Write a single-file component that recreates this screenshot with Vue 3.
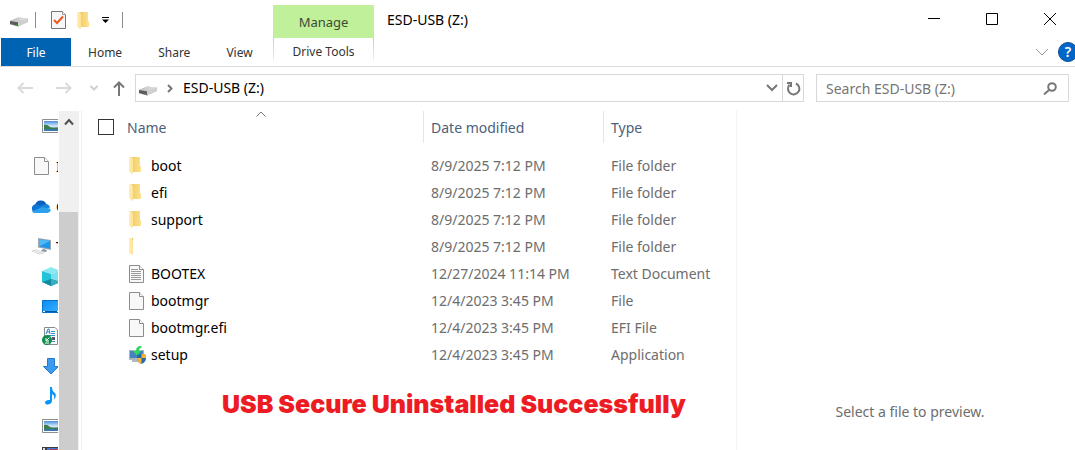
<script setup>
const tabs = ['Home', 'Share', 'View']

const files = [
  { name: 'boot', date: '8/9/2025 7:12 PM', type: 'File folder', icon: 'folder' },
  { name: 'efi', date: '8/9/2025 7:12 PM', type: 'File folder', icon: 'folder' },
  { name: 'support', date: '8/9/2025 7:12 PM', type: 'File folder', icon: 'folder' },
  { name: '', date: '8/9/2025 7:12 PM', type: 'File folder', icon: 'sliver' },
  { name: 'BOOTEX', date: '12/27/2024 11:14 PM', type: 'Text Document', icon: 'text' },
  { name: 'bootmgr', date: '12/4/2023 3:45 PM', type: 'File', icon: 'file' },
  { name: 'bootmgr.efi', date: '12/4/2023 3:45 PM', type: 'EFI File', icon: 'file' },
  { name: 'setup', date: '12/4/2023 3:45 PM', type: 'Application', icon: 'setup' },
]

const places = [
  { icon: 'picture', level: 'child' },
  { icon: 'page', level: 'root', label: 'I' },
  { icon: 'cloud', level: 'root', label: 'O' },
  { icon: 'pc', level: 'root', label: 'T' },
  { icon: 'cube', level: 'child' },
  { icon: 'desktop', level: 'child' },
  { icon: 'documents', level: 'child' },
  { icon: 'download', level: 'child' },
  { icon: 'music', level: 'child' },
  { icon: 'picture', level: 'child' },
  { icon: 'video', level: 'child' },
]
</script>

<template>
  <div class="window">
    <svg class="defs" width="0" height="0" aria-hidden="true">
      <defs>
        <linearGradient id="gold" x1="0" x2="1"><stop offset="0" stop-color="#ecc964" /><stop offset="1" stop-color="#fde18a" /></linearGradient>
        <linearGradient id="flap" x1="0" x2="1"><stop offset="0" stop-color="#ffeebb" /><stop offset="1" stop-color="#fde28f" /></linearGradient>
        <linearGradient id="metal" x1="0" x2="1"><stop offset="0" stop-color="#bdbdbd" /><stop offset="1" stop-color="#e6e6e8" /></linearGradient>
        <linearGradient id="sky" x1="0" y1="0" x2="0" y2="1"><stop offset="0" stop-color="#4a8ee0" /><stop offset="0.5" stop-color="#cfe8f8" /><stop offset="1" stop-color="#b8dcea" /></linearGradient>
        <linearGradient id="screen" x1="0" y1="0" x2="1" y2="1"><stop offset="0" stop-color="#0a8cf5" /><stop offset="1" stop-color="#3fb4ff" /></linearGradient>
      </defs>
      <symbol id="drive" viewBox="0 0 18 10">
        <path d="M0 4 8 0.500 18 1.500 18 5 8 9.500 0 7.500Z" fill="#c4c4c4" />
        <path d="M0 4 8 0.500 18 1.500 9 5Z" fill="url(#metal)" />
        <path d="M0 4 9 5.500V9.500L0 7Z" fill="#5c5c5c" />
        <path d="M8 5.300 18 1.500V5L8 9.500Z" fill="#cfcfd1" />
        <path d="M6 7h1v1H6z" fill="#18a528" />
      </symbol>
      <symbol id="folder" viewBox="0 0 12 17">
        <path d="M1 0H11V9L12 10V14Q12 15 11 15H3V1Z" fill="url(#gold)" />
        <path d="M0 0 4 2V16L3 17 0 14.500Z" fill="url(#flap)" />
      </symbol>
      <symbol id="file" viewBox="0 0 15 18">
        <path d="M0.500 0.500H10.500L14.500 4.500V17.500H0.500Z" fill="#f8f8f8" stroke="#8d8d8d" />
        <path d="M10.500 0.500V4.500H14.500" fill="#fff" stroke="#8d8d8d" />
      </symbol>
    </svg>

    <header class="titlebar">
      <div class="quick">
        <svg class="drive" width="18" height="10"><use href="#drive" /></svg>
        <span class="bar"></span>
        <button class="bare check" aria-label="Properties">
          <svg width="15" height="18" viewBox="0 0 15 18">
            <path d="M0.500 0.500H11.500L14.500 3.500V17.500H0.500Z" fill="#f5f6f7" stroke="#777" />
            <path d="M11.500 0.500V3.500H14.500" fill="#fff" stroke="#999" />
            <path d="M3 9 6 12 12 5.500" fill="none" stroke="#f1571c" stroke-width="2" />
          </svg>
        </button>
        <button class="bare newfolder" aria-label="New folder"><svg width="12" height="17"><use href="#folder" /></svg></button>
        <button class="bare more" aria-label="Customize toolbar">
          <svg width="7" height="6" viewBox="0 0 7 6"><path d="M0 0H7V1H0ZM0 2.500H7L3.500 6Z" fill="#000" /></svg>
        </button>
        <span class="bar"></span>
      </div>
      <div class="manage">Manage</div>
      <h1>ESD-USB (Z:)</h1>
      <div class="controls">
        <button class="bare" aria-label="Minimize"><svg width="12" height="12" viewBox="0 0 12 12"><path d="M0 5.500H12" stroke="#000" /></svg></button>
        <button class="bare" aria-label="Maximize"><svg width="12" height="12" viewBox="0 0 12 12"><path d="M0.500 0.500H11.500V11.500H0.500Z" fill="none" stroke="#000" /></svg></button>
        <button class="bare" aria-label="Close"><svg width="12" height="12" viewBox="0 0 12 12"><path d="M0 0 12 12M12 0 0 12" stroke="#000" /></svg></button>
      </div>
    </header>

    <nav class="ribbon">
      <button class="file">File</button>
      <div class="tabs">
        <button v-for="tab in tabs" :key="tab" class="tab">{{ tab }}</button>
      </div>
      <button class="drivetools">Drive Tools</button>
      <div class="help">
        <button class="bare" aria-label="Expand ribbon"><svg width="14" height="8" viewBox="0 0 14 8"><path d="M1 1 7 7 13 1" fill="none" stroke="#999" /></svg></button>
        <button class="round" aria-label="Help">?</button>
      </div>
    </nav>

    <div class="address">
      <div class="arrows">
        <button class="bare" aria-label="Back"><svg width="16" height="12" viewBox="0 0 16 12"><path d="M16 6H1.500M6.500 1 1.500 6 6.500 11" fill="none" stroke="#dadada" stroke-width="2" /></svg></button>
        <button class="bare" aria-label="Forward"><svg width="16" height="12" viewBox="0 0 16 12"><path d="M0 6H14.500M9.500 1 14.500 6 9.500 11" fill="none" stroke="#dadada" stroke-width="2" /></svg></button>
        <button class="bare recent" aria-label="Recent locations"><svg width="8" height="6" viewBox="0 0 8 6"><path d="M0.500 1 4 4.500 7.500 1" fill="none" stroke="#d0d0d0" stroke-width="2" /></svg></button>
        <button class="bare up" aria-label="Up"><svg width="12" height="15" viewBox="0 0 12 15"><path d="M6 15V1.500M1 6.500 6 1.500 11 6.500" fill="none" stroke="#777" stroke-width="2" /></svg></button>
      </div>
      <div class="path">
        <svg class="drive" width="18" height="10"><use href="#drive" /></svg>
        <svg class="crumb" width="6" height="9" viewBox="0 0 6 9"><path d="M1 1 4.500 4.500 1 8" fill="none" stroke="#777" stroke-width="2" /></svg>
        <span class="where">ESD-USB (Z:)</span>
        <button class="bare drop" aria-label="Previous locations"><svg width="12" height="8" viewBox="0 0 12 8"><path d="M1 1 6 6 11 1" fill="none" stroke="#777" stroke-width="2" /></svg></button>
        <button class="bare refresh" aria-label="Refresh">
          <svg width="15" height="15" viewBox="0 0 15 15"><path d="M10 2.500A5.700 5.700 0 1 1 3.500 3.800" fill="none" stroke="#777" stroke-width="2" /><path d="M1 2H5V6" fill="none" stroke="#777" stroke-width="2" /></svg>
        </button>
      </div>
      <div class="search">
        <input type="text" aria-label="Search ESD-USB (Z:)" placeholder="Search ESD-USB (Z:)" />
        <button class="bare" aria-label="Search"><svg width="14" height="13" viewBox="0 0 14 13"><circle cx="9" cy="5" r="3.800" fill="none" stroke="#777" stroke-width="2" /><path d="M6.500 7.500 1 12.500" stroke="#777" stroke-width="2" /></svg></button>
      </div>
    </div>

    <main class="body">
      <aside class="tree">
        <ul>
          <li v-for="(place, i) in places" :key="i" :class="place.level">
            <svg v-if="place.icon === 'picture'" width="20" height="14" viewBox="0 0 20 14">
              <path d="M0.500 0.500H19.500V13.500H0.500Z" fill="#fff" stroke="#8f8f8f" />
              <path d="M2 2H18V12H2Z" fill="url(#sky)" />
              <path d="M2 6Q5 5 8 8 12 9 18 8V10H2Z" fill="#3e7d4b" />
              <path d="M2 10H18V12H2Z" fill="#3778a8" />
            </svg>
            <svg v-else-if="place.icon === 'page'" width="15" height="18"><use href="#file" /></svg>
            <svg v-else-if="place.icon === 'cloud'" width="20" height="13" viewBox="0 0 20 13">
              <path d="M4 5A6 6 0 0 1 15.500 4.500L12 9 3 8Z" fill="#0a5fbf" />
              <path d="M4.500 13A4.500 4.500 0 0 1 4 4.300Q6 3.800 8 5L15 9 9 13Z" fill="#1073d6" />
              <path d="M9 6.500 14 4Q18 3.500 19 7.500L14 9Z" fill="#1585dc" />
              <path d="M4.500 13Q2 13 1 11.500L11 7 19 8.500Q21 12 16.500 13Z" fill="#2aa1ec" />
            </svg>
            <svg v-else-if="place.icon === 'pc'" width="20" height="17" viewBox="0 0 20 17">
              <path d="M7 0 20 2V12L7 9.500Z" fill="#9aa7b1" />
              <path d="M8 1.200 19 3V10.700L8 8.600Z" fill="#1e96ea" />
              <path d="M8 1.200 19 3 8 8.500Z" fill="#52b7f5" />
              <path d="M12 11 16 12 15 14 10 13Z" fill="#87939c" />
              <path d="M0 13 5 11.500 14 14.500 9 16.500Z" fill="#bcc4ca" />
              <path d="M2 13 10 15.500M4 12.200 12 14.800" stroke="#f6f7f8" />
            </svg>
            <svg v-else-if="place.icon === 'cube'" width="20" height="19" viewBox="0 0 20 19">
              <path d="M0 4 9 0 18 4 9 7Z" fill="#8ce8f0" />
              <path d="M0 4 9 7V19L0 15Z" fill="#25c3da" />
              <path d="M9 7 18 4V15L9 19Z" fill="#7ee0ee" />
              <path d="M0 15 9 12 18 15 9 19Z" fill="#128ba2" />
              <path d="M9 12V19L18 15Z" fill="#35aebd" />
            </svg>
            <svg v-else-if="place.icon === 'desktop'" width="20" height="13" viewBox="0 0 20 13">
              <path d="M0.500 0.500H19.500V12.500H0.500Z" fill="url(#screen)" stroke="#0870c6" />
              <path d="M1 11.500H20" stroke="#075899" />
              <path d="M1 11.500H3M15 11.500H18" stroke="#fff" />
            </svg>
            <svg v-else-if="place.icon === 'documents'" width="20" height="18" viewBox="0 0 20 18">
              <path d="M2.500 0.500H13L15.500 3V17.500H2.500Z" fill="#fff" stroke="#8b8b8b" />
              <path d="M4 7 6 2H7L8 7M5 5H8" fill="none" stroke="#2486cf" />
              <path d="M9 4.500H13M9 6.500H13M5 8.500H13M9 14.500H13" stroke="#3a91d0" />
              <path d="M10 10H13V13H10Z" fill="#557" />
              <circle cx="5" cy="13" r="5" fill="#0f8d4b" />
              <path d="M7.500 10.500 4 14M4 11V14H7M3 16H7" fill="none" stroke="#fff" />
            </svg>
            <svg v-else-if="place.icon === 'download'" width="18" height="17" viewBox="0 0 18 17">
              <path d="M5.500 0.500H12.500V8.500H16.500L9 16 1.500 8.500H5.500Z" fill="#3c9bee" stroke="#2579cc" />
            </svg>
            <svg v-else-if="place.icon === 'music'" class="music" width="11" height="18" viewBox="0 0 11 18">
              <path d="M5 0H7Q7 4 10 6 12 9 9 13 10 8 7 7V14Q6.500 17 3 17.500 0 17.500 0 15.500 0.500 12.500 5 13Z" fill="#0596f7" />
            </svg>
            <svg v-else width="20" height="18" viewBox="0 0 20 18">
              <path d="M0 0H20V18H0Z" fill="#3c3c42" />
              <path d="M5 1H16V17H5Z" fill="#3f7bd8" />
              <path d="M8 2H15V17H8Z" fill="#b23b48" />
              <path d="M1 1H3V3H1ZM1 5H3V7H1ZM1 9H3V11H1Z" fill="#ddd" />
            </svg>
            <span v-if="place.label">{{ place.label }}</span>
          </li>
        </ul>
        <div class="scroll">
          <button class="bare" aria-label="Scroll up"><svg width="10" height="8" viewBox="0 0 10 8"><path d="M1 6.500 5 2 9 6.500" fill="none" stroke="#505050" stroke-width="2" /></svg></button>
          <div class="thumb"></div>
        </div>
      </aside>

      <section class="list">
        <table>
          <thead>
            <tr>
              <th class="pick"><input type="checkbox" aria-label="Select all" /></th>
              <th class="name">Name
                <svg class="sort" width="10" height="6" viewBox="0 0 10 6"><path d="M0.500 5.500 5 1 9.500 5.500" fill="none" stroke="#777" /></svg>
              </th>
              <th class="date">Date modified</th>
              <th class="type">Type</th>
            </tr>
          </thead>
          <tbody>
            <tr v-for="(file, i) in files" :key="i">
              <td></td>
              <td class="name">
                <div class="entry">
                  <span class="icon">
                    <svg v-if="file.icon === 'folder'" width="12" height="17"><use href="#folder" /></svg>
                    <svg v-else-if="file.icon === 'sliver'" width="4" height="17" viewBox="0 0 4 17"><path d="M0 0H4V16L3 17 0 14.500Z" fill="url(#flap)" /><path d="M3.500 0V2" stroke="#ecc964" /></svg>
                    <svg v-else-if="file.icon === 'setup'" width="18" height="18" viewBox="0 0 18 18">
                      <path d="M0 4H15V14H0Z" fill="#a9b7c1" />
                      <path d="M1 5H14V12H1Z" fill="#477fbf" />
                      <path d="M3 14H9V16H3Z" fill="#aebbc2" />
                      <path d="M12 0Q7 0 7 5H4L8 10 12 5H10Q10 2 13 1Z" fill="#2bd65a" />
                      <path d="M8 9 12.500 7.500 17 9V12Q17 16 12.500 18 8 16 8 12Z" fill="#236bb0" />
                      <path d="M12.500 7.500 17 9V12H12.500ZM8 12H12.500V18Q8 16 8 12Z" fill="#f6b32b" />
                    </svg>
                    <svg v-else width="15" height="18" viewBox="0 0 15 18">
                      <use href="#file" />
                      <path v-if="file.icon === 'text'" d="M2 4.500H9M2 6.500H12M2 8.500H12M2 10.500H12M2 12.500H12M2 14.500H12" stroke="#9b9b9b" />
                    </svg>
                  </span>
                  <span>{{ file.name }}</span>
                </div>
              </td>
              <td class="date">{{ file.date }}</td>
              <td class="type">{{ file.type }}</td>
            </tr>
          </tbody>
        </table>
        <p class="notice">USB Secure Uninstalled Successfully</p>
      </section>

      <section class="preview">Select a file to preview.</section>
    </main>
  </div>
</template>

<style>
body {
  margin: 0;
  background: #fff;
}
</style>

<style scoped>
.window {
  min-height: 100vh;
  display: flex;
  flex-direction: column;
  overflow: hidden;
  background: #fff;
  color: #000;
  font-family: "Noto Sans", "Open Sans", sans-serif;
  font-size: 14px;
}
.window * { box-sizing: border-box; }
.defs { position: absolute; }
svg { display: block; flex: none; }
button, input { font: inherit; color: inherit; margin: 0; }
.bare {
  display: flex;
  align-items: center;
  justify-content: center;
  padding: 0;
  border: 0;
  background: none;
}
.titlebar { display: flex; height: 38px; }
.quick {
  display: flex;
  align-items: center;
  width: 273px;
  padding: 2px 0 0 10px;
}
.quick .drive { margin: 4px 7px 0 0; }
.bar { width: 1px; height: 16px; background: #8c8c8c; }
.check { margin-left: 15px; }
.newfolder { margin-left: 11px; }
.more { margin: 0 13px; }
.manage {
  width: 101px;
  margin-top: 5px;
  background: #c1f09a;
  color: #3c4a34;
  font-size: 13px;
  line-height: 34px;
  text-align: center;
}
h1 {
  flex: 1;
  margin: 0 0 0 13px;
  font-size: 14px;
  font-weight: 400;
  line-height: 40px;
}
.controls { display: flex; margin-right: -4px; }
.controls .bare { width: 58px; }
.ribbon {
  display: flex;
  height: 29px;
  padding-left: 1px;
  border-bottom: 1px solid #dcdcdc;
  font-size: 12px;
}
.ribbon button { color: #333; }
.file, .tab, .drivetools {
  height: 28px;
  padding: 0;
  border: 0;
  background: none;
}
.ribbon .file { width: 70px; background: #0063b1; color: #fff; }
.tabs { display: flex; width: 202px; }
.tab { padding: 0 19px 0 17px; }
.drivetools {
  width: 101px;
  height: 22px;
  padding-top: 6px;
  line-height: 16px;
  border: solid;
  border-width: 0 1px;
  border-image: linear-gradient(#c8c8c8, #f0f0f0) 1;
}
.help { display: flex; align-items: center; gap: 9px; margin: 0 -3px 0 auto; }
.ribbon .round {
  width: 20px;
  height: 20px;
  padding: 0;
  border: 1px solid #0b4f94;
  border-radius: 50%;
  background: #0067c8;
  color: #fff;
  font-size: 14px;
  font-weight: 600;
  line-height: 18px;
}
.address { display: flex; height: 43px; padding: 7px 6px 8px 0; }
.arrows { display: flex; align-items: center; width: 135px; padding-left: 17px; }
.arrows .bare + .bare { margin-left: 23px; }
.arrows .recent.bare { margin-left: 18px; }
.arrows .up.bare { margin-left: 15px; }
.path {
  display: flex;
  flex: 1;
  align-items: center;
  min-width: 200px;
  padding-left: 3px;
  border: 1px solid #d9d9d9;
}
.path .drive { margin-top: 5px; }
.crumb { margin: 0 10px; }
.where { flex: 1; line-height: 24px; }
.drop { width: 20px; }
.refresh { align-self: stretch; width: 21px; border-left: 1px solid #d9d9d9; }
.search {
  display: flex;
  align-items: center;
  width: 253px;
  margin-left: 12px;
  padding: 0 11px 0 9px;
  border: 1px solid #d9d9d9;
}
.search input {
  flex: 1;
  min-width: 0;
  padding: 0;
  border: 0;
  outline: 0;
  background: none;
}
.search input::placeholder { color: #757575; opacity: 1; }
.body { display: flex; flex: 1; }
.tree {
  display: flex;
  width: 82px;
  height: calc(100vh - 110px);
  padding-top: 1px;
  border-right: 1px solid #f0f0f0;
  overflow: hidden;
}
.tree ul {
  width: 58px;
  margin: 0 1px 0 0;
  padding: 0;
  overflow: hidden;
  list-style: none;
}
.tree li { display: flex; align-items: center; height: 30px; }
.tree .child { padding-left: 42px; }
.tree .root { height: 40px; padding: 10px 0 0 31px; }
.tree .root svg { margin-right: 5px; }
.tree .root svg[width="15"] { margin: 0 7px 0 3px; }
.music { margin-left: 3px; }
.scroll {
  display: flex;
  flex-direction: column;
  width: 20px;
  padding-right: 1px;
  background: #f0f0f0;
}
.scroll .bare { height: 21px; }
.thumb { flex: 1; margin-top: 80px; background: #cdcdcd; }
.list { width: 655px; flex: none; border-right: 1px solid #f3f3f3; }
table { width: 100%; border-collapse: collapse; table-layout: fixed; }
thead { height: 42px; }
th {
  height: 33px;
  padding: 0;
  color: #4c607a;
  font-weight: 400;
  line-height: 32px;
  text-align: left;
  background: linear-gradient(#e5e5e5, #e5e5e5) right 1px / 1px 32px no-repeat;
}
thead tr { vertical-align: top; }
.pick, th.type { background: none; }
.pick { width: 33px; padding: 9px 0 0 16px; }
.pick input {
  display: block;
  appearance: none;
  width: 16px;
  height: 16px;
  border: 1px solid #333;
  background: #fff;
}
.name { width: 309px; }
th.name { position: relative; padding-left: 12px; }
.sort { position: absolute; left: 141px; top: 1px; }
.date { width: 180px; }
th.date, th.type, td.date, td.type { padding-left: 7px; }
th { padding-top: 2px; }
td { height: 27px; padding: 0; color: #6d6d6d; line-height: 26px; white-space: nowrap; }
.entry { display: flex; align-items: center; padding-left: 14px; color: #000; }
.icon { width: 22px; }
.notice {
  margin: 20px 0 0 140px;
  color: #ed1c24;
  font-family: "Arial Black", Inter, sans-serif;
  font-size: 25px;
  font-weight: 900;
  line-height: 32px;
  white-space: nowrap;
}
.preview {
  display: flex;
  flex: 1;
  justify-content: center;
  align-items: flex-end;
  padding: 0 0 28px 8px;
  color: #6d6d6d;
  line-height: 20px;
}
</style>
